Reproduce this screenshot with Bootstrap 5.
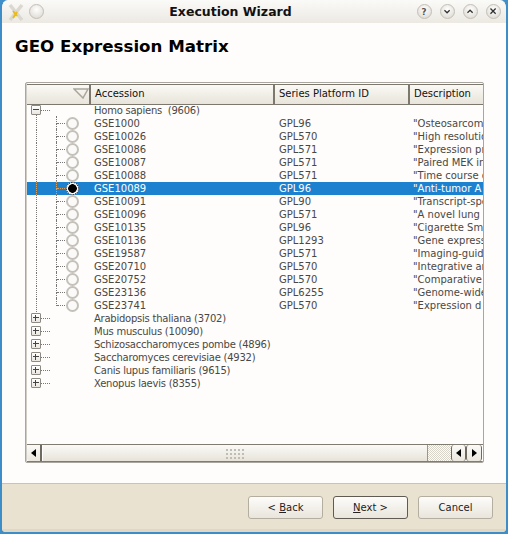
<!DOCTYPE html>
<html lang="en">
<head>
<meta charset="utf-8">
<title>Execution Wizard</title>
<link href="https://cdn.jsdelivr.net/npm/bootstrap@5.3.0/dist/css/bootstrap.min.css" rel="stylesheet">
<style>
html,body{margin:0;height:534px;width:508px;overflow:hidden;background:#3f8fc9}
body{font-family:"DejaVu Sans",sans-serif;font-size:10px;line-height:13px;color:#4a4845}
.wiz{height:534px;width:508px;border:solid #3d8ec8;border-width:0 2px 2px 2px;border-radius:8px 8px 6px 6px;overflow:hidden;background:#eae2d1}
.wiz-top{height:23px;background:linear-gradient(#fafaf8,#ece9e2);margin:0 -2px;padding:0 7px;border-radius:8px 8px 0 0;flex:none}
.wiz-name{font-weight:700;font-size:12.5px;color:#111;line-height:23px;text-align:center;flex:1 1 auto}
.knob{width:15px;height:15px;border-radius:50%;border:1px solid #c2beb6;background:radial-gradient(circle at 50% 35%,#fff,#d9d5cc);display:block;flex:none}
.wiz-body{height:461px;flex:none;background:#fefdfb;padding:0 22px 0 23px;border-bottom:1px solid #c9c3b5;margin-right:-1px}
.wiz-h{font-weight:700;font-size:16.67px;line-height:22px;color:#000;margin:0;padding:13px 0 0 0;margin-left:-10px;height:59px}
.pane{height:381px;width:459px;border:1px solid #a9a69f;border-radius:2px;background:#fefdfb;box-shadow:inset 1px 0 0 #d0cdc6;padding:1px 0 0 1px;overflow:hidden}
.heads{display:grid;grid-template-columns:64px 184px 135px 1fr;height:21px;flex:none}
.hd{background:linear-gradient(#fbf9f5,#e8e4da);border:solid #7d786e;border-width:1px 2px 1px 0;color:#111;padding:1px 0 0 4px;line-height:15px;white-space:nowrap;overflow:hidden}
.hd:last-child{border-right:0}
.hd svg{margin-top:2px}
.rows{flex:1 1 auto;min-height:0;overflow:hidden;margin-top:-1px}
.rw{display:grid;grid-template-columns:64px 184px 135px 1fr;height:13px;white-space:nowrap}
.rw>span{overflow:hidden;padding-left:4px}
.rw>span:nth-child(2){overflow:visible;padding-left:3px}
.rw>span:nth-child(4){padding-left:3px}
.rw.root>span:nth-child(2){letter-spacing:-.24px}
.rw.on{background:#1c82d0;color:#fff}
.tw,.rt{position:relative;overflow:visible!important}
.tw::before{content:"";position:absolute;left:29px;top:-1px;height:8px;border-left:1px dotted #777}
.tw::after{content:"";position:absolute;left:30px;top:6px;width:10px;border-top:1px dotted #777}
.tw i{position:absolute;left:29px;top:6px;height:8px;border-left:1px dotted #777}
.tw u{position:absolute;left:9px;top:0;height:13px;border-left:1px dotted #777}
.on .tw::before,.on .tw::after,.on .tw i,.on .tw u{border-color:#d8a060}
.rd{position:absolute;left:39px;top:0;width:13px;height:13px;border-radius:50%;border:2px solid #c4c1ba;background:#fbfaf8;z-index:1}
.rd.sel{background:radial-gradient(circle,#000 0 4px,#fff 4.600px);border:1px dotted #000}
.ex{position:absolute;left:4px;top:1px;width:10px;height:10px;border:1px solid #8d8a83;border-radius:1px;background:linear-gradient(#fff,#e9e6df);z-index:1}
.ex::before{content:"";position:absolute;left:1px;right:1px;top:3px;height:1px;background:#444}
.ex.pl::after{content:"";position:absolute;top:1px;bottom:1px;left:3px;width:1px;background:#444}
.rt::after{content:"";position:absolute;left:14px;top:6px;width:9px;border-top:1px dotted #777}
.rt.open::before{content:"";position:absolute;left:9px;top:11px;height:3px;border-left:1px dotted #777}
.sb{height:18px;flex:none;display:flex;background:#fefdfb;border-top:1px solid #807c72;border-bottom:1px solid #807c72;padding-right:1px}
.sb-btn{width:15px;flex:none;background:linear-gradient(#fbfaf7,#ebe7de);border:1px solid #6f6a60;border-width:0 1px;border-radius:3px;display:flex;align-items:center;justify-content:center}
.sb-btn:last-child{width:16px}
.sb-first{border-left:0;border-radius:3px 0 0 3px;border-right-width:2px}
.sb-track{flex:1 1 auto;background:linear-gradient(#fbfaf7,#e7e3d9);border-right:1px solid #9a968c;display:flex;align-items:center;justify-content:center;margin-left:1px}
.sb-dith{width:23px;flex:none;background:repeating-conic-gradient(#d8d4ca 0 25%,#fefdfb 0 50%) 0 0/2px 2px}
.grip{width:20px;height:11px;background-image:radial-gradient(#bdb9af 0.7px,transparent 0.8px);background-size:4px 4px}
.tri-l{width:0;height:0;border:4px solid transparent;border-left-width:0;border-right:5px solid #000}
.tri-r{width:0;height:0;border:4px solid transparent;border-right-width:0;border-left:5px solid #000}
.wiz-foot{height:48px;flex:none;padding:12px 13px 0 0;gap:10px;background:#eae2d1;box-shadow:inset 0 -3px 0 #e0d8c2}
.wiz-btn{width:75px;height:23px;padding:0;font-size:10px;line-height:21px;color:#222;background:linear-gradient(#fdfcfa,#e9e5dc);border:1px solid #b3ae9f;border-radius:3px;--bs-btn-hover-bg:#f5f2ec}
.wiz-btn.dft{border-color:#5f5b52}
</style>
</head>
<body>
<div class="wiz d-flex flex-column">
  <div class="wiz-top d-flex align-items-center">
    <svg width="18" height="18" viewBox="0 0 18 18" class="flex-none"><path d="M3 2 L15 17 M15 2 L3 17" stroke="#dbd8d0" stroke-width="3.500"/><path d="M6 8 L10 13 M10 9 L6 15" stroke="#e9bb1c" stroke-width="2"/></svg>
    <span class="knob ms-1"></span>
    <span class="wiz-name">Execution Wizard</span>
    <span class="d-flex">
      <svg class="knob" viewBox="0 0 15 15"><text x="7" y="11" font-size="10" font-weight="700" text-anchor="middle" fill="#555">?</text></svg>
      <svg class="knob ms-2" viewBox="0 0 15 15"><path d="M4 6 L7 9 L10 6" fill="none" stroke="#333" stroke-width="1.500"/></svg>
      <svg class="knob ms-2" viewBox="0 0 15 15"><path d="M4 9 L7 6 L10 9" fill="none" stroke="#333" stroke-width="1.500"/></svg>
      <svg class="knob ms-2" viewBox="0 0 15 15"><path d="M4 4 L10 10 M10 4 L4 10" fill="none" stroke="#333" stroke-width="1.500"/></svg>
    </span>
  </div>
  <div class="wiz-body">
    <h1 class="wiz-h">GEO Expression Matrix</h1>
    <div class="pane d-flex flex-column">
      <div class="heads">
        <div class="hd"><svg width="16" height="11" viewBox="0 0 16 11" class="d-block ms-auto"><path d="M1 1 H15 L10 10 Z" fill="none" stroke="#aaa69c" stroke-width="1.500"/></svg></div>
        <div class="hd">Accession</div>
        <div class="hd">Series Platform ID</div>
        <div class="hd">Description</div>
      </div>
      <div class="rows">
        <div class="rw root"><span class="rt open"><b class="ex"></b></span><span>Homo sapiens&nbsp; (9606)</span><span></span><span></span></div>
        <div class="rw"><span class="tw"><u></u><i></i><b class="rd"></b></span><span>GSE1000</span><span>GPL96</span><span>"Osteosarcom</span></div>
        <div class="rw"><span class="tw"><u></u><i></i><b class="rd"></b></span><span>GSE10026</span><span>GPL570</span><span>"High resolutio</span></div>
        <div class="rw"><span class="tw"><u></u><i></i><b class="rd"></b></span><span>GSE10086</span><span>GPL571</span><span>"Expression pr</span></div>
        <div class="rw"><span class="tw"><u></u><i></i><b class="rd"></b></span><span>GSE10087</span><span>GPL571</span><span>"Paired MEK in</span></div>
        <div class="rw"><span class="tw"><u></u><i></i><b class="rd"></b></span><span>GSE10088</span><span>GPL571</span><span>"Time course o</span></div>
        <div class="rw on"><span class="tw"><u></u><i></i><b class="rd sel"></b></span><span>GSE10089</span><span>GPL96</span><span>"Anti-tumor A</span></div>
        <div class="rw"><span class="tw"><u></u><i></i><b class="rd"></b></span><span>GSE10091</span><span>GPL90</span><span>"Transcript-spe</span></div>
        <div class="rw"><span class="tw"><u></u><i></i><b class="rd"></b></span><span>GSE10096</span><span>GPL571</span><span>"A novel lung c</span></div>
        <div class="rw"><span class="tw"><u></u><i></i><b class="rd"></b></span><span>GSE10135</span><span>GPL96</span><span>"Cigarette Sm</span></div>
        <div class="rw"><span class="tw"><u></u><i></i><b class="rd"></b></span><span>GSE10136</span><span>GPL1293</span><span>"Gene express</span></div>
        <div class="rw"><span class="tw"><u></u><i></i><b class="rd"></b></span><span>GSE19587</span><span>GPL571</span><span>"Imaging-guid</span></div>
        <div class="rw"><span class="tw"><u></u><i></i><b class="rd"></b></span><span>GSE20710</span><span>GPL570</span><span>"Integrative ar</span></div>
        <div class="rw"><span class="tw"><u></u><i></i><b class="rd"></b></span><span>GSE20752</span><span>GPL570</span><span>"Comparative</span></div>
        <div class="rw"><span class="tw"><u></u><i></i><b class="rd"></b></span><span>GSE23136</span><span>GPL6255</span><span>"Genome-wide</span></div>
        <div class="rw"><span class="tw"><u></u><b class="rd"></b></span><span>GSE23741</span><span>GPL570</span><span>"Expression d</span></div>
        <div class="rw root"><span class="rt"><b class="ex pl"></b></span><span>Arabidopsis thaliana (3702)</span><span></span><span></span></div>
        <div class="rw root"><span class="rt"><b class="ex pl"></b></span><span>Mus musculus (10090)</span><span></span><span></span></div>
        <div class="rw root"><span class="rt"><b class="ex pl"></b></span><span>Schizosaccharomyces pombe (4896)</span><span></span><span></span></div>
        <div class="rw root"><span class="rt"><b class="ex pl"></b></span><span>Saccharomyces cerevisiae (4932)</span><span></span><span></span></div>
        <div class="rw root"><span class="rt"><b class="ex pl"></b></span><span>Canis lupus familiaris (9615)</span><span></span><span></span></div>
        <div class="rw root"><span class="rt"><b class="ex pl"></b></span><span>Xenopus laevis (8355)</span><span></span><span></span></div>
      </div>
      <div class="sb">
        <div class="sb-btn sb-first"><span class="tri-l"></span></div>
        <div class="sb-track"><span class="grip"></span></div>
        <div class="sb-dith"></div>
        <div class="sb-btn"><span class="tri-l"></span></div>
        <div class="sb-btn"><span class="tri-r"></span></div>
      </div>
    </div>
  </div>
  <div class="wiz-foot d-flex justify-content-end">
    <button type="button" class="btn wiz-btn">&lt; <u>B</u>ack</button>
    <button type="button" class="btn wiz-btn dft"><u>N</u>ext &gt;</button>
    <button type="button" class="btn wiz-btn">Cancel</button>
  </div>
</div>
</body>
</html>
